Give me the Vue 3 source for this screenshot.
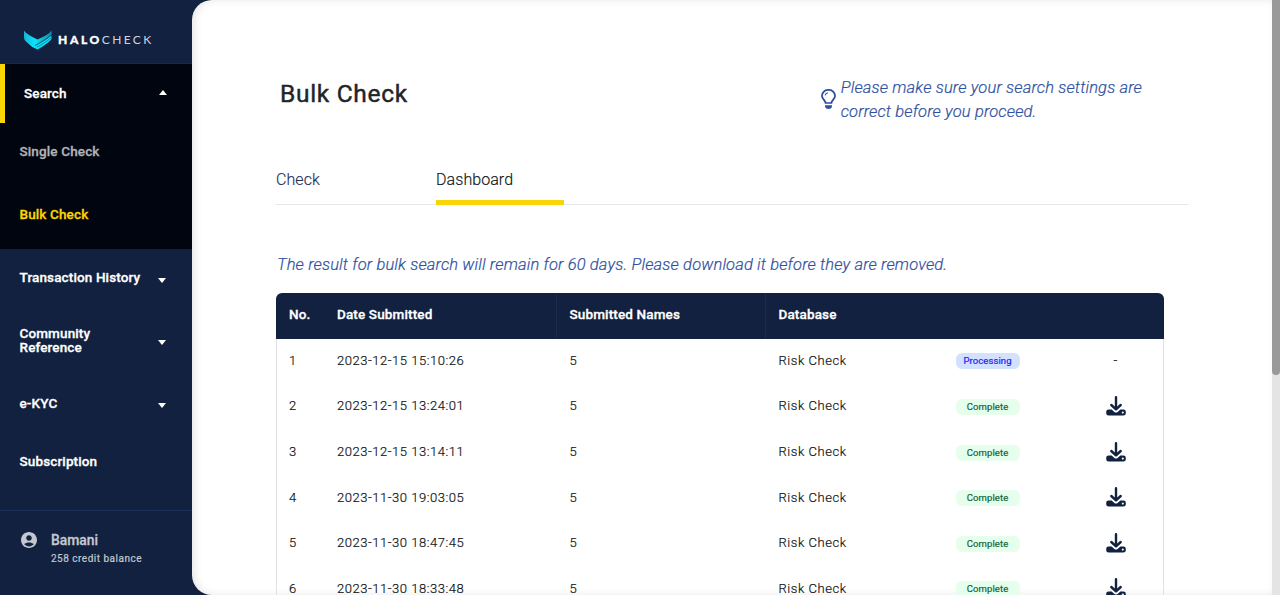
<script setup>
const rows = [
  { date: '2023-12-15 15:10:26', done: false },
  { date: '2023-12-15 13:24:01', done: true },
  { date: '2023-12-15 13:14:11', done: true },
  { date: '2023-11-30 19:03:05', done: true },
  { date: '2023-11-30 18:47:45', done: true },
  { date: '2023-11-30 18:33:48', done: true },
]
const menu = [
  { label: 'Transaction History', cls: 'history', arrow: true },
  { label: 'Community Reference', cls: 'community', arrow: true },
  { label: 'e-KYC', cls: 'kyc', arrow: true },
  { label: 'Subscription', cls: 'subscription', arrow: false },
]
</script>

<template>
  <div class="app">
    <aside class="sidebar">
      <div class="brand">
        <svg class="logo" viewBox="0 0 28 20" width="28" height="20">
          <defs>
            <linearGradient id="wing" x1="0" y1="0" x2="1" y2="0">
              <stop offset="0" stop-color="#14b4d6" />
              <stop offset="0.4" stop-color="#08e5fb" />
              <stop offset="1" stop-color="#1a86a8" />
            </linearGradient>
          </defs>
          <path d="M0 0.500 Q2 4 13.500 9.600 Q25 4.500 27.600 0.500 V4.500 Q25 8 10.500 16 L2.500 12 Q0 10.500 0 7.500Z" fill="url(#wing)" />
          <path d="M10 16.600 Q23 9.500 27.500 5.500 V9 Q25.500 12.500 13.700 19.600 L10 17.800Z" fill="#08dff5" />
          <path d="M2.500 12 L10.500 15.600 L11.500 18.400 L8 16.800Z" fill="#08e5fb" />
          <path d="M11 15.400 Q23 8.500 27.600 4.600 M13 17.200 Q24 10.800 27.600 7.600" stroke="#123c5c" stroke-width="0.500" fill="none" />
        </svg>
        <div class="wordmark"><b>HALO</b><span>CHECK</span></div>
      </div>
      <nav class="search">
        <div class="nav-head"><span>Search</span><i class="caret up"></i></div>
        <div class="nav-sub">Single Check</div>
        <div class="nav-sub current">Bulk Check</div>
      </nav>
      <nav class="menu">
        <div v-for="m in menu" :key="m.label" class="item" :class="m.cls">
          <span>{{ m.label }}</span><i v-if="m.arrow" class="caret"></i>
        </div>
      </nav>
      <div class="user">
        <svg class="avatar" viewBox="2 2 20 20" width="16" height="16">
          <path fill="#c3c8d0" d="M12 2C6.48 2 2 6.48 2 12s4.48 10 10 10 10-4.48 10-10S17.520 2 12 2zm0 4c1.930 0 3.500 1.570 3.500 3.500S13.930 13 12 13s-3.500-1.570-3.500-3.500S10.070 6 12 6zm0 14c-2.030 0-4.430-.82-6.140-2.880C7.550 15.800 9.680 15 12 15s4.450.8 6.140 2.120C16.430 19.180 14.030 20 12 20z" />
        </svg>
        <div>
          <div class="name">Bamani</div>
          <div class="balance">258 credit balance</div>
        </div>
      </div>
    </aside>

    <main class="page">
      <header class="top">
        <h1>Bulk Check</h1>
        <div class="hint">
          <svg viewBox="0 0 14 20" width="15" height="20" preserveAspectRatio="none">
            <path d="M4.300 14 C4.300 11 .9 10.500 .9 6.700 A6.100 5.900 0 0 1 13.100 6.700 C13.100 10.500 9.700 11 9.700 14Z" fill="none" stroke="#2f509f" stroke-width="1.700" />
            <path d="M3.800 6.400 A3.200 3.200 0 0 1 6.500 3.800" fill="none" stroke="#2f509f" stroke-width="1" />
            <path d="M3.800 16.300 H10.200 V18 Q9.500 20 7 20 Q4.500 20 3.800 18Z" fill="#2f509f" />
          </svg>
          <p>Please make sure your search settings are<br>correct before you proceed.</p>
        </div>
      </header>
      <div class="tabs">
        <div class="tab">Check</div>
        <div class="tab active">Dashboard</div>
      </div>
      <p class="notice">The result for bulk search will remain for 60 days. Please download it before they are removed.</p>
      <div class="table">
        <div class="row head">
          <span>No.</span><span>Date Submitted</span><span>Submitted Names</span><span>Database</span><span></span><span></span>
        </div>
        <div v-for="(r, i) in rows" :key="r.date" class="row">
          <span>{{ i + 1 }}</span>
          <span>{{ r.date }}</span>
          <span>5</span>
          <span>Risk Check</span>
          <span class="status"><em class="badge" :class="{ done: r.done }">{{ r.done ? 'Complete' : 'Processing' }}</em></span>
          <span class="action">
            <svg v-if="r.done" class="download" viewBox="0 0 20 20" width="20" height="20">
              <path d="M10 1.300 V12 M5.300 9 L10 13.300 L14.700 9" fill="none" stroke="#11213f" stroke-width="2.400" stroke-linecap="round" stroke-linejoin="round" />
              <path fill="#11213f" fill-rule="evenodd" d="M2.600 13.600 H5.600 L8.400 16 Q10 17.200 11.600 16 L14.400 13.600 H17.400 Q19.800 13.600 19.800 15.800 V17.200 Q19.800 19.400 17.400 19.400 H2.600 Q.2 19.400 .2 17.200 V15.800 Q.2 13.600 2.600 13.600Z M16.800 15.500 a1 1 0 1 0 .01 0Z" />
            </svg>
            <template v-else>-</template>
          </span>
        </div>
      </div>
    </main>
    <div class="scroll"><div class="thumb"></div></div>
  </div>
</template>

<style>
body { margin: 0; overflow: hidden; }
</style>

<style scoped>
* { box-sizing: border-box; }
.app { display: flex; width: 1280px; height: 595px; overflow: hidden; background: #11213f; font-family: Roboto, "Liberation Sans", sans-serif; }
.sidebar { width: 192px; flex: none; display: flex; flex-direction: column; color: #fff; font-size: 13.500px; font-weight: 500; line-height: 14px; letter-spacing: .13px; -webkit-text-stroke: .3px currentColor; }
.brand { height: 64px; display: flex; padding: 30px 0 0 24px; border-bottom: 1px solid #17294a; }
.logo { flex: none; }
.wordmark { font-family: Lato, sans-serif; font-size: 12px; line-height: 19px; margin-left: 6px; white-space: nowrap; -webkit-text-stroke: 0; }
.wordmark b { font-weight: 900; letter-spacing: 2.600px; -webkit-text-stroke: .3px #fff; }
.wordmark span { font-weight: 400; letter-spacing: 2.350px; color: #cdd3dc; }
.search { background: #01050f; height: 185px; }
.nav-head { height: 59px; border-left: 5px solid #fad505; display: flex; align-items: center; justify-content: space-between; padding: 0 25px 0 19px; }
.nav-sub { padding: 21px 0 0 19.500px; height: 63px; color: #b1b3b7; }
.nav-sub.current { color: #fad505; }
.nav-head span, .item span { padding-bottom: 2px; }
.caret { width: 0; height: 0; border: 4.500px solid transparent; border-top: 5px solid #fff; border-bottom: 0; }
.caret.up { border-top: 0; border-bottom: 5px solid #fff; margin-top: -3px; }
.item { display: flex; justify-content: space-between; align-items: center; padding: 0 26px 0 19.500px; }
.item .caret { margin-top: 3px; }
.history { height: 58px; }
.history .caret { margin-top: 5px; }
.community { height: 68px; }
.community span { width: 90px; }
.kyc { height: 58px; }
.subscription { height: 58px; }
.user { margin-top: auto; height: 85px; border-top: 1px solid #1b3159; display: flex; padding: 21px 0 0 21px; gap: 14px; color: #c3c8d0; }
.name { font-size: 13.900px; line-height: 16px; letter-spacing: 0; }
.balance { font-size: 10px; line-height: 12px; font-weight: 400; letter-spacing: .5px; margin-top: 5px; -webkit-text-stroke: .2px currentColor; }
.page { flex: 1; min-width: 0; background: #fff; border-radius: 20px 0 0 20px; box-shadow: inset 3px 0 10px -1px rgba(0, 0, 0, .11); padding: 0 0 0 84px; overflow: hidden; }
.top { display: flex; justify-content: space-between; height: 162px; padding: 76px 130px 0 4px; }
h1 { margin: 3px 0 0; font-size: 24.500px; line-height: 30px; font-weight: 400; letter-spacing: .7px; color: #212529; -webkit-text-stroke: .45px currentColor; }
.hint { display: flex; gap: 5px; color: #2f509f; }
.hint svg { margin-top: 13px; }
.hint p, .notice { margin: 0; font-size: 16.500px; line-height: 24px; letter-spacing: .135px; font-style: italic; font-weight: 300; color: #2f509f; white-space: nowrap; -webkit-text-stroke: .2px currentColor; }
.tabs { display: flex; gap: 32px; width: 912px; height: 43px; border-bottom: 1px solid #e4e6eb; }
.tab { width: 128px; height: 43px; padding-top: 6px; font-size: 16px; line-height: 24px; letter-spacing: .07px; font-weight: 300; color: #1d3157; -webkit-text-stroke: .15px currentColor; }
.tab.active { color: #111417; border-bottom: 5px solid #fad505; }
.notice { margin: 48px 0 0 1px; }
.table { margin-top: 16px; width: 888px; border: 1px solid #dee2e6; border-top: 0; border-radius: 7px 7px 0 0; }
.row { display: grid; grid-template-columns: 48px 232.500px 209px 142px 160px 94.500px; height: 45.600px; align-items: center; font-size: 13px; letter-spacing: .54px; color: #111417; font-weight: 300; -webkit-text-stroke: .2px currentColor; }
.row > span { padding: 0 0 2px 12px; }
.row.head { background: #11213f; border-radius: 6px 6px 0 0; margin: 0 -1px; color: #fff; font-size: 13.500px; font-weight: 500; -webkit-text-stroke: .3px currentColor; letter-spacing: .14px; align-items: stretch; line-height: 42px; }
.row.head > span { padding: 0 0 0 13px; }
.head span:nth-child(2), .head span:nth-child(3) { border-right: 1px solid #1b2c4b; }
.row > .status { padding-left: 47px; }
.badge { display: block; width: 64px; height: 16px; border-radius: 6px; background: #d2e1ff; color: #261cf5; font-size: 9.500px; line-height: 16px; letter-spacing: .1px; font-weight: 400; -webkit-text-stroke: .2px currentColor; font-style: normal; text-align: center; margin-top: 2px; }
.badge.done { background: #e5ffec; color: #17653a; }
.row > .action { padding: 0 0 2px 0; text-align: center; }
.download { display: block; margin: 0 auto; }
.scroll { width: 8px; flex: none; background: #e4e4e4; }
.thumb { height: 375px; background: #999; border-radius: 0 0 4px 4px; }
</style>
